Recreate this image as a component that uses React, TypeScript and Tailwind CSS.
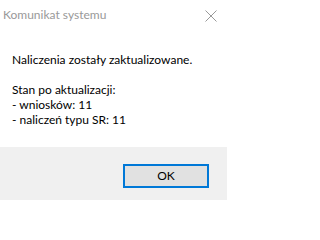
import React from 'react';

export default function App() {
  return (
    <div className="w-[227px] h-[200px] flex flex-col bg-white font-['Lato',sans-serif] text-[12px] text-black overflow-hidden">
      {/* Title bar */}
      <div className="h-[30px] flex items-center justify-between pl-[3px] pr-[10px]">
        <span className="text-[12px] text-[#999999] leading-none">Komunikat systemu</span>
        <svg width="12" height="12" viewBox="0 0 12 12" className="mt-[2px]">
          <path d="M0.5 0.5 L11.5 11.5 M11.5 0.5 L0.5 11.5" stroke="#999999" strokeWidth="1" fill="none" />
        </svg>
      </div>

      {/* Message */}
      <div className="flex-1 pl-[12px] pt-[22px] leading-[15px]">
        <p>Naliczenia zostały zaktualizowane.</p>
        <p>&nbsp;</p>
        <p>Stan po aktualizacji:</p>
        <p>- wniosków: 11</p>
        <p>- naliczeń typu SR: 11</p>
      </div>

      {/* Footer */}
      <div className="h-[53px] bg-[#f0f0f0] flex items-start justify-end pt-[17px] pr-[18px]">
        <button
          type="button"
          className="w-[86px] h-[24px] bg-[#e1e1e1] border-2 border-[#0078d7] flex items-center justify-center text-[12px]"
        >
          OK
        </button>
      </div>
    </div>
  );
}
